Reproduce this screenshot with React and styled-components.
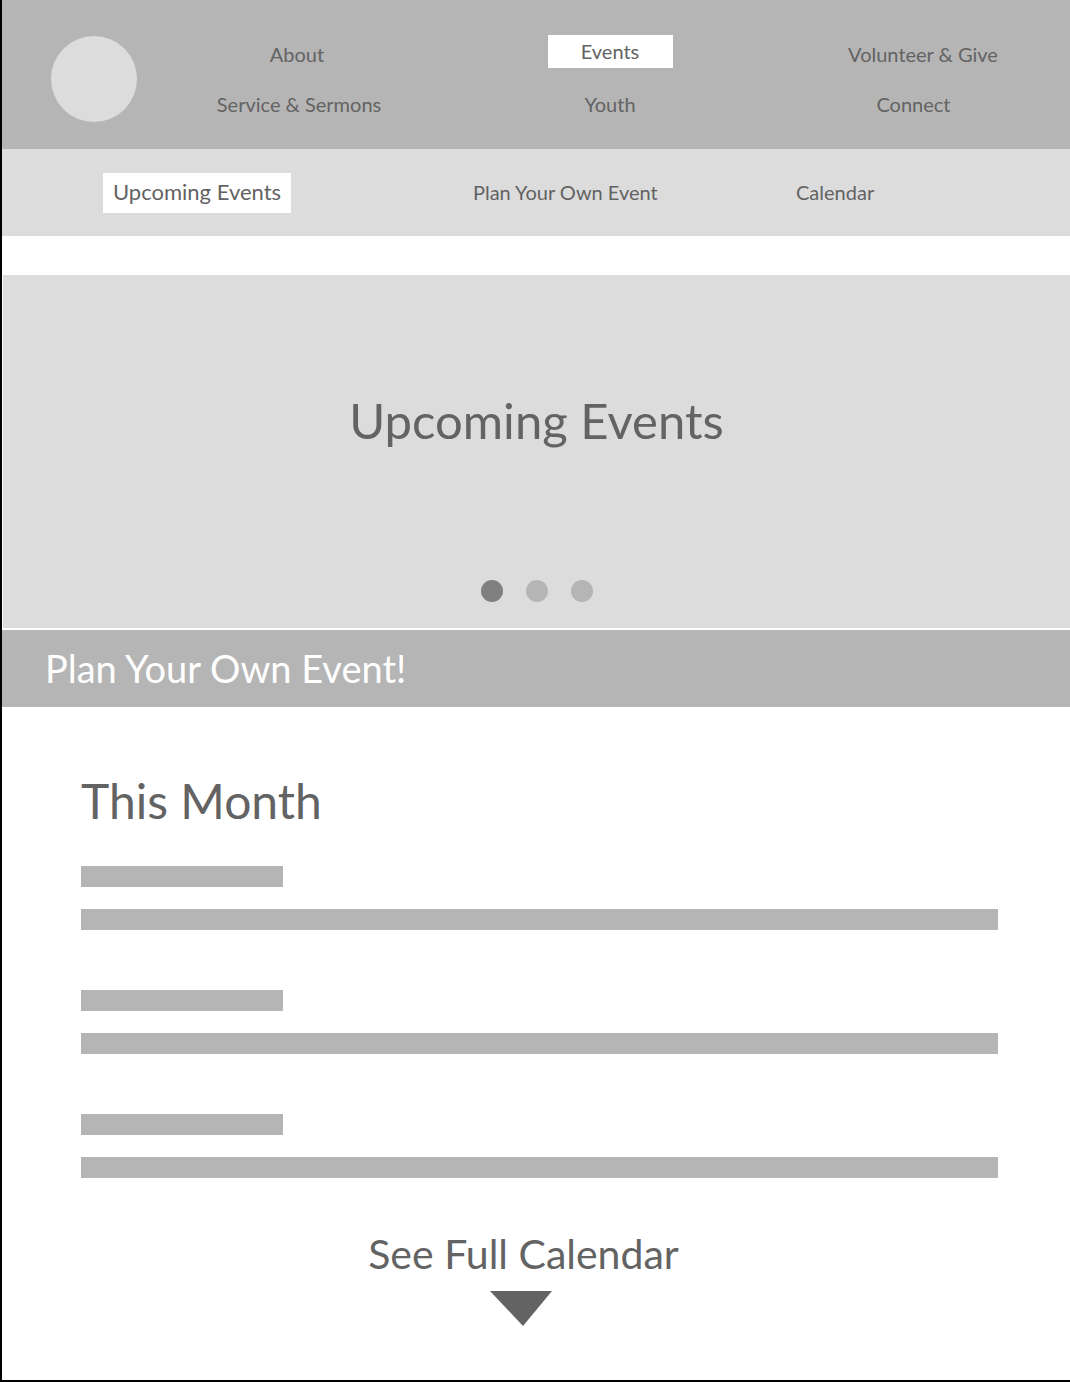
import React, { useState } from "react";
import styled, { createGlobalStyle } from "styled-components";

const colors = {
  ink: "#636363",
  mid: "#b5b5b5",
  light: "#dcdcdc",
  dot: "#808080",
};

const GlobalStyle = createGlobalStyle`
  *, *::before, *::after { box-sizing: border-box; }
  body {
    margin: 0;
    background: #fff;
    color: ${colors.ink};
    font-family: Lato, "Noto Sans", sans-serif;
  }
  h1, h2, ul { margin: 0; padding: 0; font-weight: 400; }
  ul { list-style: none; }
  a { color: inherit; text-decoration: none; }
`;

const Page = styled.div`
  min-height: 100vh;
  border-left: 2px solid #000;
  border-bottom: 2px solid #000;
`;

const Header = styled.header`
  display: flex;
  align-items: flex-start;
  gap: 13px;
  padding: 35px 0 24px 49px;
  background: ${colors.mid};
`;

const Logo = styled.a`
  flex: none;
  width: 86px;
  height: 86px;
  margin-top: 1px;
  border-radius: 50%;
  background: ${colors.light};
`;

const MainNav = styled.nav`
  flex: 1;
  display: grid;
  gap: 10px;
`;

const NavRow = styled.div`
  display: grid;
  grid-template-columns: ${(p) => p.$columns};
  align-items: center;
  justify-items: center;
  height: 40px;
`;

const NavLink = styled.a`
  padding-bottom: 2px;
  font-size: 20px;
  line-height: 32px;
  white-space: nowrap;
  ${(p) =>
    p.$active &&
    `
    align-self: start;
    min-width: 125px;
    padding-bottom: 0;
    line-height: 33px;
    text-align: center;
    background: #fff;
  `}
`;

const SubNav = styled.nav`
  display: grid;
  grid-template-columns: 370fr 323fr 274fr;
  align-items: center;
  justify-items: start;
  height: 87px;
  padding-left: 101px;
  background: ${colors.light};
`;

const SubLink = styled.a`
  padding-bottom: 2px;
  font-size: 20px;
  line-height: 38px;
  white-space: nowrap;
  ${(p) =>
    p.$active &&
    `
    padding: 0 10px 2px;
    font-size: 22px;
    background: #fff;
  `}
`;

const Hero = styled.section`
  display: flex;
  flex-direction: column;
  align-items: center;
  gap: 130px;
  margin: 39px 0 2px 1px;
  padding: 115px 0 26px;
  background: ${colors.light};
`;

const Title = styled.h1`
  font-size: 49px;
  line-height: 60px;
`;

const SectionTitle = styled.h2`
  font-size: 48px;
  line-height: 60px;
`;

const Dots = styled.div`
  display: flex;
  gap: 23px;
`;

const Dot = styled.button`
  width: 22px;
  height: 22px;
  padding: 0;
  border: 0;
  border-radius: 50%;
  cursor: pointer;
  background: ${(p) => (p.$active ? colors.dot : colors.mid)};
`;

const Banner = styled.a`
  display: block;
  padding: 8px 43px 9px;
  background: ${colors.mid};
  color: #fff;
  font-size: 38px;
  line-height: 60px;
`;

const Main = styled.main`
  padding: 64px 72px 54px 79px;
`;

const EventList = styled.ul`
  display: grid;
  gap: 60px;
  margin-top: 35px;
`;

const EventItem = styled.li`
  display: grid;
  gap: 22px;
`;

const Bar = styled.div`
  width: ${(p) => (p.$short ? "22%" : "100%")};
  height: 21px;
  background: ${colors.mid};
`;

const CalendarLink = styled.a`
  display: flex;
  flex-direction: column;
  align-items: center;
  gap: 9px;
  margin: 48px 32px 0 0;
  font-size: 41px;
  line-height: 56px;
`;

const Arrow = styled.svg`
  width: 68px;
  height: 35px;
  fill: ${colors.ink};
`;

const navRows = [
  {
    columns: "294fr 332fr 294fr",
    items: ["About", "Events", "Volunteer & Give"],
  },
  {
    columns: "298fr 324fr 283fr 15fr",
    items: ["Service & Sermons", "Youth", "Connect"],
  },
];
const subItems = ["Upcoming Events", "Plan Your Own Event", "Calendar"];
const slides = [0, 1, 2];
const events = [0, 1, 2];

export default function App() {
  const [slide, setSlide] = useState(0);

  return (
    <>
      <GlobalStyle />
      <Page>
        <Header>
          <Logo href="#home" aria-label="Home" />
          <MainNav aria-label="Main">
            {navRows.map((row) => (
              <NavRow key={row.columns} $columns={row.columns}>
                {row.items.map((item) => (
                  <NavLink key={item} href="#" $active={item === "Events"}>
                    {item}
                  </NavLink>
                ))}
              </NavRow>
            ))}
          </MainNav>
        </Header>
        <SubNav aria-label="Events">
          {subItems.map((item, i) => (
            <SubLink key={item} href="#" $active={i === 0}>
              {item}
            </SubLink>
          ))}
        </SubNav>
        <Hero>
          <Title>Upcoming Events</Title>
          <Dots>
            {slides.map((n) => (
              <Dot
                key={n}
                type="button"
                aria-label={`Slide ${n + 1}`}
                $active={n === slide}
                onClick={() => setSlide(n)}
              />
            ))}
          </Dots>
        </Hero>
        <Banner href="#plan">Plan Your Own Event!</Banner>
        <Main>
          <SectionTitle>This Month</SectionTitle>
          <EventList>
            {events.map((n) => (
              <EventItem key={n}>
                <Bar $short />
                <Bar />
              </EventItem>
            ))}
          </EventList>
          <CalendarLink href="#calendar">
            See Full Calendar
            <Arrow viewBox="0 0 68 35" aria-hidden="true">
              <path d="M0 0H62L33 35Z" />
            </Arrow>
          </CalendarLink>
        </Main>
      </Page>
    </>
  );
}
